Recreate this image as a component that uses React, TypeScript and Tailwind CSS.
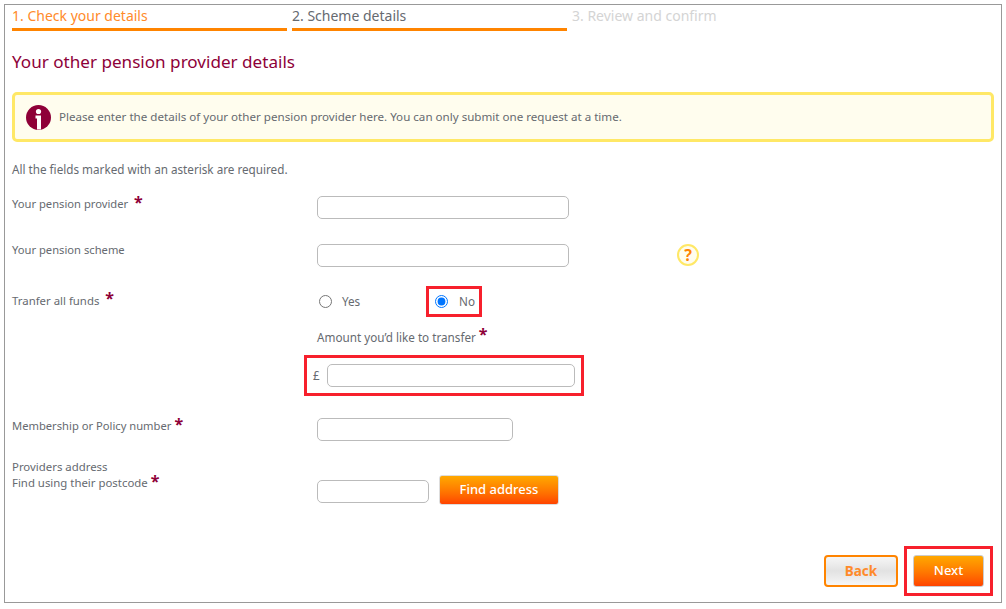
import React from "react";

const font = { fontFamily: '"Noto Sans", "DejaVu Sans", sans-serif' };

const Req = () => (
  <span className="ml-[3px] inline-block align-top text-[16px] leading-[13px] font-bold text-[#8e0038]">*</span>
);

const TextInput = ({ width }: { width: string }) => (
  <input type="text" className={`${width} h-[23px] rounded-[5px] border border-[#bbbbbb] bg-white`} />
);

export default function App() {
  return (
    <div className="h-[609px] w-[1006px] bg-white pt-[4px] pl-[4px] text-[11.7px] text-[#666a70]" style={font}>
      <div className="flex h-[599px] w-[998px] flex-col border border-[#999999] px-[7px]">
        {/* Steps */}
        <div className="flex gap-[5px]">
          <div className="h-[26px] w-[275px] border-b-[3px] border-[#ff8400] text-[14px] leading-[22px] text-[#ff8a2a]">1. Check your details</div>
          <div className="h-[26px] w-[275px] border-b-[3px] border-[#ff8400] text-[14px] leading-[22px] text-[#666a70]">2. Scheme details</div>
          <div className="h-[26px] w-[275px] text-[14px] leading-[22px] text-[#d4d4d4]">3. Review and confirm</div>
        </div>

        <h1 className="mt-[19px] text-[17.1px] leading-[24px] font-normal text-[#8e0038]">Your other pension provider details</h1>

        {/* Notice */}
        <div className="mt-[18px] flex h-[50px] items-center gap-[8px] rounded-[5px] border-[3px] border-[#ffe866] bg-[#fffdee] pl-[11px]">
          <svg width="25" height="25" viewBox="0 0 25 25">
            <circle cx="12.5" cy="12.5" r="12.5" fill="#8e0038" />
            <circle cx="12.5" cy="6.5" r="2.6" fill="#fff" />
            <path d="M9.5 10.5h5.500v14h-4v-11h-1.500z" fill="#fff" />
          </svg>
          <span className="text-[11.6px]">Please enter the details of your other pension provider here. You can only submit one request at a time.</span>
        </div>

        <p className="mt-[18px] h-[18px] leading-[18px]">All the fields marked with an asterisk are required.</p>

        {/* Form */}
        <div className="mt-[18px] flex">
          <div className="w-[305px] text-[11.2px] leading-[16px]">Your pension provider <Req /></div>
          <TextInput width="w-[252px]" />
        </div>

        <div className="mt-[25px] flex">
          <div className="w-[305px] text-[11.2px] leading-[12px]">Your pension scheme</div>
          <TextInput width="w-[252px]" />
          <div className="ml-[108px] flex h-[22px] w-[22px] items-center justify-center rounded-full border-2 border-[#ffe866] bg-[#fffdee] text-[16px] font-bold text-[#ff8400]">?</div>
        </div>

        <div className="mt-[19px] flex h-[31px] items-center">
          <div className="w-[305px] pb-[2px] text-[11.4px] leading-[18px]">Tranfer all funds <Req /></div>
          <label className="ml-[2px] flex w-[107px] items-center gap-[10px]">
            <input type="radio" name="all" />
            Yes
          </label>
          <label className="flex h-[31px] w-[56px] items-center gap-[11px] border-[3px] border-[#f7202c] pl-[6px]">
            <input type="radio" name="all" defaultChecked />
            No
          </label>
        </div>

        <div className="mt-[11px] h-[18px] pl-[305px] leading-[18px]">Amount you’d like to transfer<Req /></div>

        <div className="mt-[9px] pl-[292px]">
          <div className="flex h-[41px] w-[280px] items-center border-[3px] border-[#f7202c] pl-[6px]">
            <span className="w-[14px]">£</span>
            <TextInput width="w-[248px]" />
          </div>
        </div>

        <div className="mt-[22px] flex">
          <div className="w-[305px] text-[11.2px] leading-[16px]">Membership or Policy number<Req /></div>
          <TextInput width="w-[196px]" />
        </div>

        <div className="mt-[19px] flex">
          <div className="-mt-px w-[305px] text-[11.4px] leading-[16px]">
            Providers address
            <br />
            Find using their postcode<Req />
          </div>
          <div className="mt-[15px] flex items-start">
            <div className="mt-[5px] flex">
              <TextInput width="w-[112px]" />
            </div>
            <button className="ml-[10px] h-[30px] w-[120px] rounded-[3px] border border-[#dddddd] bg-gradient-to-b from-[#ffa800] to-[#ff4200] text-[13px] font-medium text-white">Find address</button>
          </div>
        </div>

        {/* Footer */}
        <div className="mt-auto mr-px mb-[6px] flex items-center justify-end gap-[6px]">
          <button className="h-[32px] w-[74px] rounded-[4px] border-2 border-[#ff8400] bg-gradient-to-b from-[#f6f6f6] via-[#e2e2e2] to-[#f6f6f6] text-[13.5px] font-bold text-[#ff8a2a]">Back</button>
          <div className="border-[3px] border-[#f7202c] p-[6px]">
            <button className="block h-[32px] w-[71px] rounded-[3px] border border-[#cccccc] bg-gradient-to-b from-[#ffa800] to-[#ff4200] text-[13px] font-medium text-white">Next</button>
          </div>
        </div>
      </div>
    </div>
  );
}
